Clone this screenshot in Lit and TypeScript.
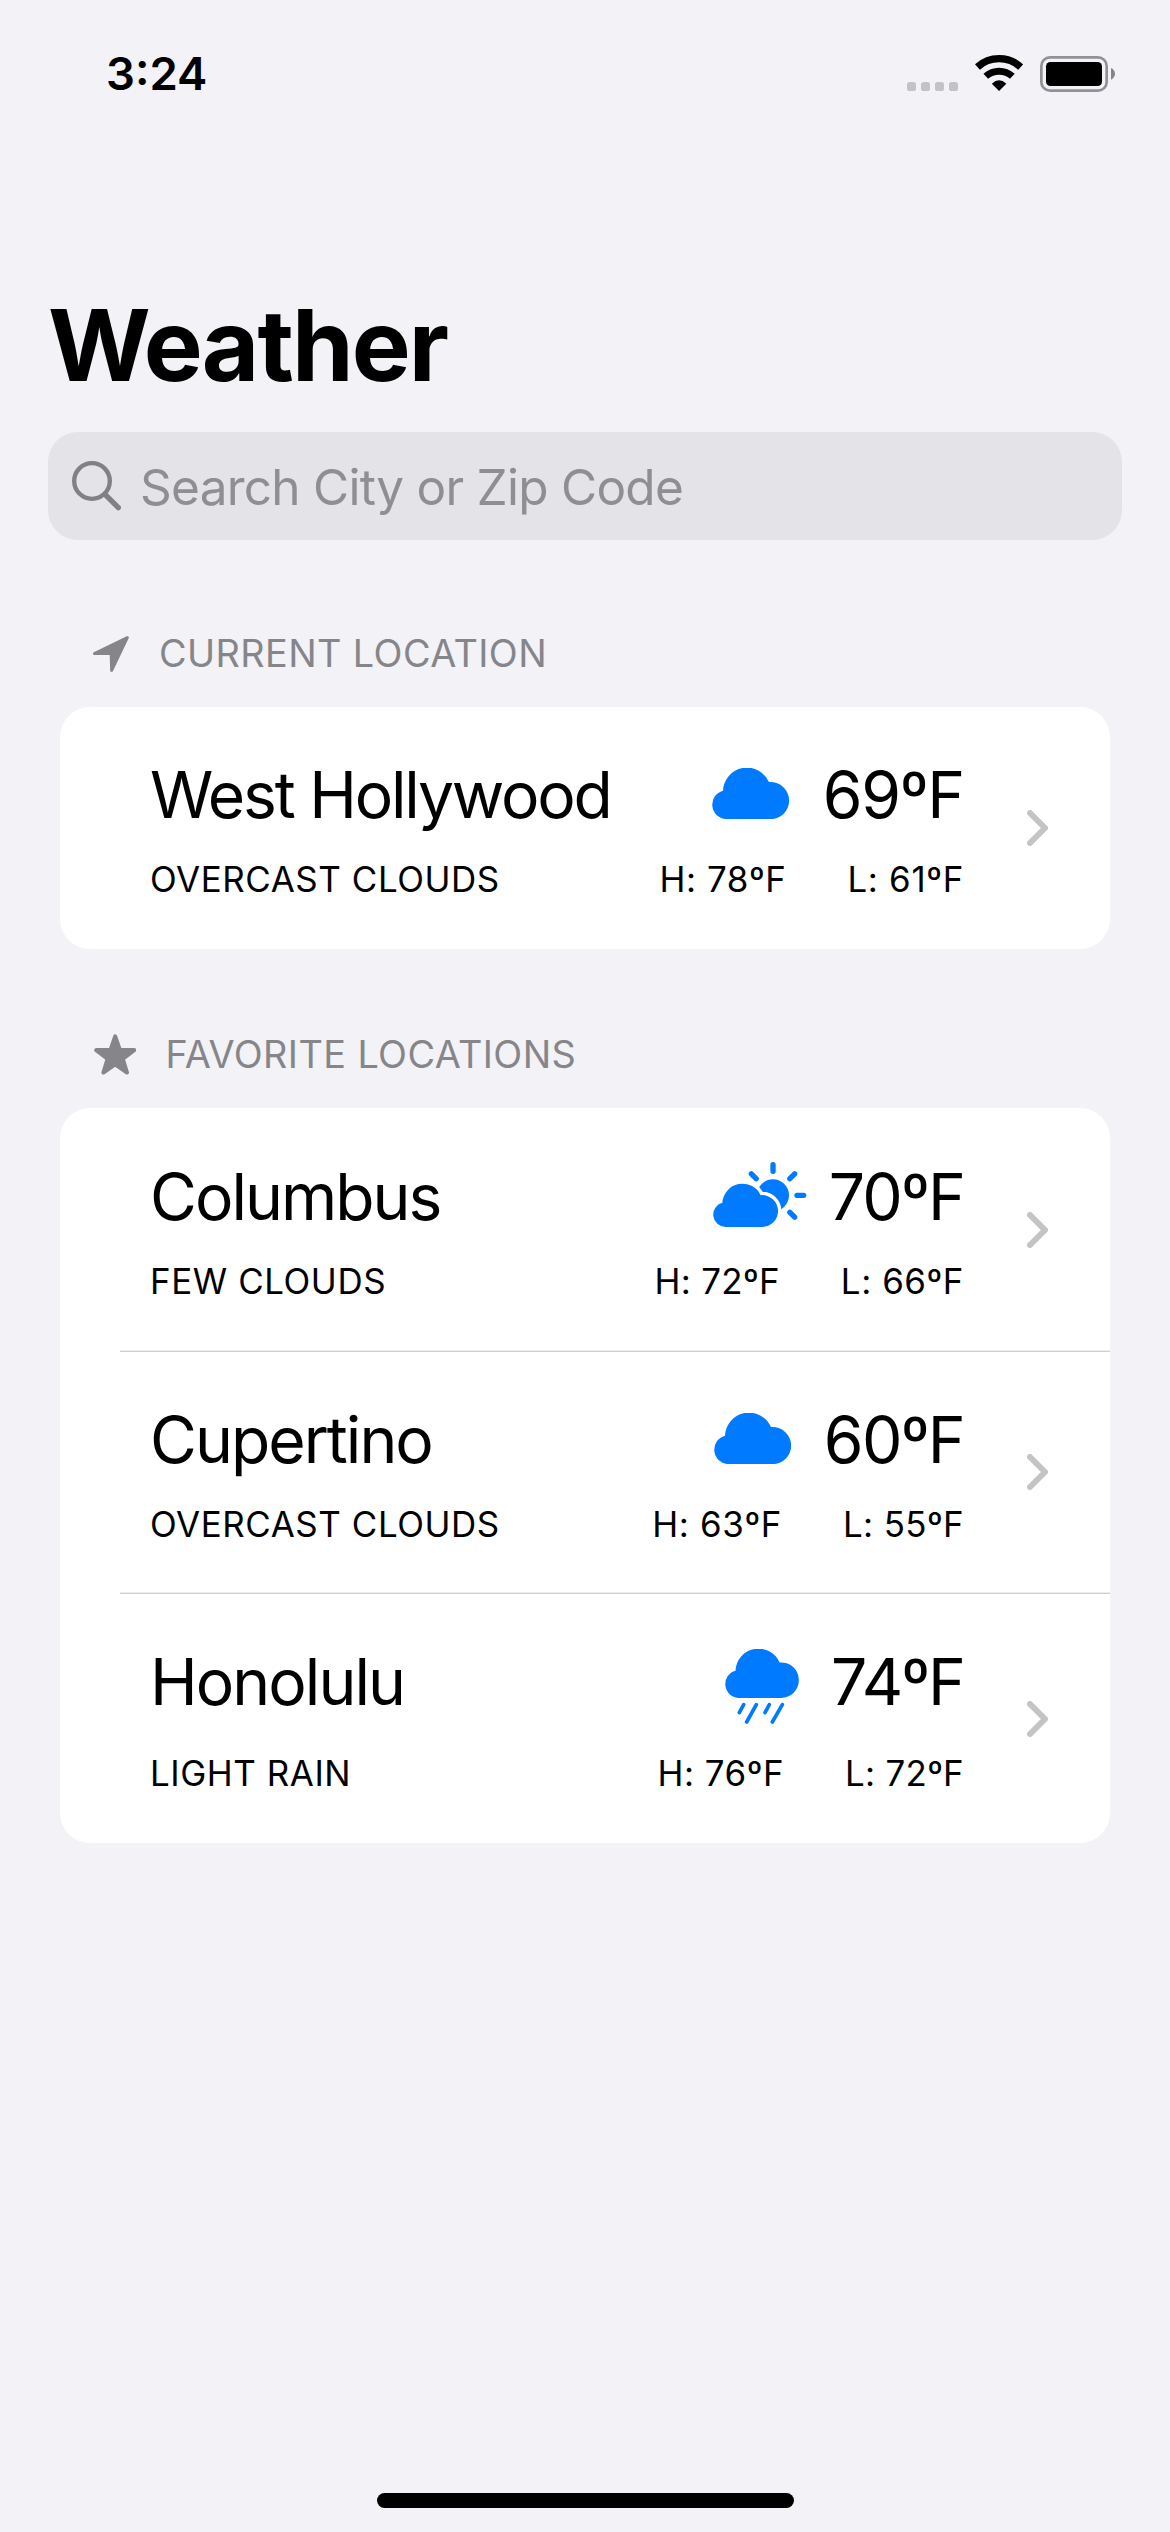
import { LitElement, html, svg, css, nothing } from "lit";
import { customElement, property } from "lit/decorators.js";
import { classMap } from "lit/directives/class-map.js";
import { styleMap } from "lit/directives/style-map.js";

type Condition = "cloud" | "cloud-sun" | "cloud-rain";

/** A text run with its letter spacing in pixels. */
interface Run {
  text: string;
  track: number;
}

interface Place {
  name: Run;
  summary: Run;
  temp: Run;
  high: Run;
  low: Run;
  condition: Condition;
}

const run = (text: string, track: number): Run => ({ text, track });

const current: Place[] = [
  {
    name: run("West Hollywood", -2.22),
    summary: run("OVERCAST CLOUDS", 0.58),
    temp: run("69ºF", -1.27),
    high: run("H: 78ºF", 0.56),
    low: run("L: 61ºF", 0.7),
    condition: "cloud",
  },
];

const favorites: Place[] = [
  {
    name: run("Columbus", -1.98),
    summary: run("FEW CLOUDS", 0.6),
    temp: run("70ºF", -1.84),
    high: run("H: 72ºF", 0.3),
    low: run("L: 66ºF", 0.57),
    condition: "cloud-sun",
  },
  {
    name: run("Cupertino", -1.98),
    summary: run("OVERCAST CLOUDS", 0.58),
    temp: run("60ºF", -1.73),
    high: run("H: 63ºF", 0.64),
    low: run("L: 55ºF", 0.38),
    condition: "cloud",
  },
  {
    name: run("Honolulu", -1.94),
    summary: run("LIGHT RAIN", 0.56),
    temp: run("74ºF", -1.99),
    high: run("H: 76ºF", 0.53),
    low: run("L: 72ºF", 0.28),
    condition: "cloud-rain",
  },
];

const cloudShape = svg`<path d="M44 153.5A43.5 43.5 0 0 1 33 68A72 72 0 0 1 171 42.3A55.5 55.5 0 0 1 231.5 98A55.5 55.5 0 0 1 176 153.5Z"/>`;

const smallCloud =
  "M37 195A37 37 0 0 1 28 122.3A60.5 60.5 0 0 1 143 99.5A47.5 47.5 0 0 1 195 147.5A47.5 47.5 0 0 1 147.5 195Z";

const conditionIcon = (condition: Condition) => {
  switch (condition) {
    case "cloud":
      return html`<svg class="cond cloud" viewBox="0 0 232 154">${cloudShape}</svg>`;
    case "cloud-sun":
      return html`<svg class="cond cloud-sun" viewBox="0 0 281 195">
        <circle cx="180" cy="100" r="48" />
        <path class="halo" d=${smallCloud} />
        <path d=${smallCloud} />
        <path
          class="rays"
          d="M180 8V28M252 100H272M230.500 50L245 35.500M115 35.500L129.500 50M230.500 151L245 165.500"
        />
      </svg>`;
    case "cloud-rain":
      return html`<svg class="cond cloud-rain" viewBox="0 0 222 225">
        <g transform="scale(.957)">${cloudShape}</g>
        <path class="drops" d="M56 167L43 191M94 167L65 219M133 167L120 191M172 167L142 219" />
      </svg>`;
  }
};

const label = (cls: string, r: Run) =>
  html`<span class=${cls} style=${styleMap({ letterSpacing: `${r.track}px` })}>${r.text}</span>`;

@customElement("weather-row")
export class WeatherRow extends LitElement {
  @property({ attribute: false }) place!: Place;

  static styles = css`
    :host {
      display: flex;
      align-items: center;
      box-sizing: border-box;
      height: 242px;
      padding: 0 62px 0 90px;
    }
    .main {
      align-self: flex-start;
      flex: 1;
      display: flex;
      flex-direction: column;
      gap: 23px;
      padding-top: 48px;
    }
    .main.tall {
      gap: 30px;
    }
    .line {
      display: flex;
      justify-content: space-between;
      white-space: nowrap;
    }
    .first {
      height: 79px;
      font-size: 64.2px;
      line-height: 79px;
    }
    .second {
      height: 44px;
      font-size: 34.9px;
      line-height: 44px;
    }
    .now {
      display: flex;
      align-items: center;
    }
    .range {
      display: flex;
      gap: 61px;
    }
    .cond {
      display: block;
      flex: none;
      fill: #007aff;
    }
    .cloud {
      width: 77.3px;
      height: 51.3px;
      margin: 0 33px 2px 0;
    }
    .cloud-sun {
      width: 93.700px;
      height: 65px;
      margin: 0 22px 5px 0;
    }
    .cloud-rain {
      width: 74px;
      height: 75px;
      margin: 9px 32px 0 0;
    }
    .halo {
      stroke: #fff;
      stroke-width: 20;
    }
    .rays,
    .drops {
      fill: none;
      stroke: #007aff;
      stroke-linecap: round;
      stroke-width: 16;
    }
    .drops {
      stroke-width: 11;
    }
    .chevron {
      flex: none;
      width: 21px;
      height: 36px;
      margin-left: 63px;
      fill: none;
      stroke: #c4c4c6;
      stroke-width: 6;
      stroke-linecap: round;
      stroke-linejoin: round;
    }
  `;

  render() {
    const p = this.place;
    return html`
      <div class=${classMap({ main: true, tall: p.condition === "cloud-rain" })}>
        <div class="line first">
          ${label("name", p.name)}
          <div class="now">${conditionIcon(p.condition)}${label("temp", p.temp)}</div>
        </div>
        <div class="line second">
          ${label("summary", p.summary)}
          <div class="range">${label("high", p.high)}${label("low", p.low)}</div>
        </div>
      </div>
      <svg class="chevron" viewBox="0 0 21 36"><path d="M3 3L18 18L3 33" /></svg>
    `;
  }
}

@customElement("app-root")
export class AppRoot extends LitElement {
  static styles = css`
    :host {
      display: flex;
      flex-direction: column;
      box-sizing: border-box;
      width: 1170px;
      height: 2532px;
      overflow: hidden;
      background: #f2f2f7;
      color: #000;
      font-family: Inter, "Liberation Sans", sans-serif;
    }
    .status {
      display: flex;
      justify-content: space-between;
      align-items: flex-start;
      height: 285px;
      box-sizing: border-box;
      padding: 46px 55px 0 106px;
    }
    .time {
      font-size: 45.5px;
      line-height: 56px;
      font-weight: 600;
    }
    .signals {
      display: flex;
      align-items: flex-end;
      gap: 17px;
      height: 46px;
    }
    .signals svg {
      display: block;
    }
    .dots {
      width: 51px;
      height: 9px;
      margin-bottom: 1px;
      fill: #c2c2c7;
    }
    .wifi {
      width: 48.3px;
      height: 36px;
      margin-bottom: 1px;
    }
    .arcs {
      fill: none;
      stroke: #000;
    }
    .battery {
      width: 75px;
      height: 36px;
    }
    .shell {
      fill: none;
      stroke: #929296;
      stroke-width: 8;
    }
    .tip {
      fill: #858589;
    }
    .title {
      margin: 0 0 27px;
      padding-left: 48px;
      font-size: 99px;
      line-height: 120px;
      font-weight: 700;
      letter-spacing: -1.94px;
    }
    .search {
      display: flex;
      align-items: center;
      box-sizing: border-box;
      height: 108px;
      margin: 0 48px;
      padding-left: 24px;
      border-radius: 30px;
      background: #e3e3e8;
      color: #8e8e93;
      font-size: 49.5px;
      letter-spacing: -0.73px;
    }
    .glass {
      width: 49px;
      height: 49.300px;
      margin-right: 19px;
      fill: none;
      stroke: #808085;
      stroke-linecap: round;
    }
    .hint {
      line-height: 60px;
      padding-top: 2px;
    }
    .heading {
      display: flex;
      align-items: center;
      height: 46px;
      margin: 90px 0 31px;
      padding-left: 92.700px;
      color: #85858a;
      font-size: 37.8px;
      line-height: 46px;
      letter-spacing: 0.41px;
    }
    .heading.fav {
      margin-top: 82px;
      padding-left: 94px;
    }
    .heading svg {
      fill: #85858a;
      stroke: #85858a;
      stroke-linejoin: round;
    }
    .arrow {
      width: 36.300px;
      height: 36.300px;
      margin: 2px 30px 0 0;
    }
    .star {
      width: 42.4px;
      height: 41px;
      margin-right: 29px;
    }
    .card {
      margin: 0 60px;
      border-radius: 30px;
      background: #fff;
    }
    .split {
      height: 2px;
      margin-left: 60px;
      background: linear-gradient(#ececed 50%, #cfcfd1 50%);
    }
    .list .top {
      padding-top: 1px;
    }
    .list .middle {
      height: 240px;
    }
    .list .bottom {
      height: 249px;
    }
    .home {
      width: 417px;
      height: 15px;
      margin: auto auto 24px;
      border-radius: 8px;
      background: #000;
    }
  `;

  render() {
    const last = favorites.length - 1;
    return html`
      <div class="status">
        <span class="time">3:24</span>
        <div class="signals">
          <svg class="dots" viewBox="0 0 51 9">
            ${[0, 14, 28, 42].map((x) => svg`<rect x=${x} width="9" height="9" rx="2.6"/>`)}
          </svg>
          <svg class="wifi" viewBox="0 0 145 108">
            <g class="arcs">
              <path stroke-width="22" d="M7.300 36A97 97 0 0 1 137.200 36" />
              <path stroke-width="21" d="M32.400 63.800A59.500 59.500 0 0 1 112.100 63.800" />
            </g>
            <path d="M72.300 108L50.500 86Q72 65 94 86Z" />
          </svg>
          <svg class="battery" viewBox="0 0 225 108">
            <rect class="shell" x="4" y="4" width="196" height="100" rx="26" />
            <rect x="18" y="18" width="168" height="72" rx="13" />
            <path class="tip" d="M213 36Q225 42 225 53.500T213 71Z" />
          </svg>
        </div>
      </div>
      <h1 class="title">Weather</h1>
      <div class="search">
        <svg class="glass" viewBox="0 0 147 148">
          <circle cx="60" cy="60" r="53.500" stroke-width="13" />
          <path d="M99 100L139 140" stroke-width="16" />
        </svg>
        <span class="hint">Search City or Zip Code</span>
      </div>

      <div class="heading">
        <svg class="arrow" viewBox="0 0 109 109">
          <path stroke-width="9" d="M103 5L4.500 52.500H54.500L56 103.500Z" />
        </svg>
        <span>CURRENT LOCATION</span>
      </div>
      <div class="card">
        ${current.map((p) => html`<weather-row .place=${p}></weather-row>`)}
      </div>

      <div class="heading fav">
        <svg class="star" viewBox="0 0 42.400 41">
          <path
            stroke-width="4"
            d="M21.200 2.300L25.900 15.800L40.200 16.100L28.800 24.800L33 38.500L21.200 30.300L9.400 38.500L13.600 24.800L2.200 16.100L16.500 15.800Z"
          />
        </svg>
        <span>FAVORITE LOCATIONS</span>
      </div>
      <div class="card list">
        ${favorites.map(
          (p, i) => html`
            ${i ? html`<div class="split"></div>` : nothing}
            <weather-row
              class=${i === 0 ? "top" : i === last ? "bottom" : "middle"}
              .place=${p}
            ></weather-row>
          `
        )}
      </div>
      <div class="home"></div>
    `;
  }
}
